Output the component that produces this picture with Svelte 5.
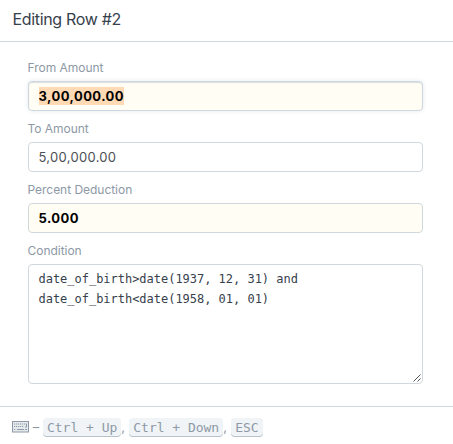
<script>
  const fields = [
    { label: 'From Amount', value: '3,00,000.00', required: true, active: true },
    { label: 'To Amount', value: '5,00,000.00' },
    { label: 'Percent Deduction', value: '5.000', required: true }
  ];
  const conditions = [
    'date_of_birth>date(1937, 12, 31) and',
    'date_of_birth<date(1958, 01, 01)'
  ];
  const shortcuts = ['Ctrl + Up', 'Ctrl + Down', 'ESC'];
</script>

<div class="editor">
  <header><span class="title">Editing Row #2</span></header>
  <main>
    {#each fields as field}
      <div class="field">
        <div class="label">{field.label}</div>
        <div class="control" class:required={field.required} class:active={field.active}>
          <span class="value">{field.value}</span>
        </div>
      </div>
    {/each}
    <div class="label">Condition</div>
    <div class="area">
      {#each conditions as line}
        <div class="line">{line}</div>
      {/each}
      <svg class="grip" width="8" height="8" viewBox="0 0 8 8"><path d="M0.5 7.5L7.5 0.5M4.5 7.5L7.5 4.5" /></svg>
    </div>
  </main>
  <footer>
    <svg class="keyboard" width="17" height="12" viewBox="0 0 17 12">
      <rect x=".5" y=".5" width="16" height="10.5" fill="#e6eaed" />
      <path d="M2 3H15M2 5.5H12M2 8.5H4" stroke-dasharray="1.2 .8" />
      <path d="M5 8.5H12M13 8.5H15M14.5 3V6H13" />
    </svg>
    <span class="dash">–</span>
    {#each shortcuts as shortcut, i}
      <kbd>{shortcut}</kbd>{#if i < shortcuts.length - 1}<span class="comma">,</span>{/if}
    {/each}
  </footer>
</div>

<style>
  :global(body) { background: #fff; }
  .editor {
    height: 444px;
    display: flex;
    flex-direction: column;
    overflow: hidden;
    box-sizing: border-box;
    font-family: Inter, sans-serif;
    color: #36414c;
  }
  header {
    box-sizing: border-box;
    height: 42px;
    padding: 8px 12.5px;
    border-bottom: 1px solid #d1d8dd;
    font-size: 16px;
    line-height: 23px;
    letter-spacing: -0.33px;
  }
  main {
    box-sizing: border-box;
    height: 364px;
    padding: 17px 30px 0 28px;
  }
  .field { height: 61px; }
  .label {
    height: 22px;
    margin-left: -0.5px;
    font-size: 12px;
    line-height: 18px;
    color: #8d99a6;
    letter-spacing: -0.03px;
  }
  .control {
    box-sizing: border-box;
    height: 30px;
    padding: 0 9.5px;
    display: flex;
    align-items: center;
    border: 1px solid #d1d8dd;
    border-radius: 4px;
    font-size: 13px;
    color: #4b4f54;
    letter-spacing: 0.3px;
  }
  .required { background: #fffdf4; color: #000; font-weight: 700; letter-spacing: 0.45px; }
  .active { box-shadow: inset 0 1px 1px #d9dee2, 0 0 4px rgba(102, 145, 185, .2); }
  .value { line-height: 18px; }
  .active .value { background: #ffdab5; }
  .area {
    position: relative;
    box-sizing: border-box;
    height: 120px;
    padding: 4px 9.5px;
    border: 1px solid #d1d8dd;
    border-radius: 4px;
    font: 12px/20px "DejaVu Sans Mono", monospace;
    letter-spacing: -0.02px;
  }
  .line { white-space: pre; }
  .grip { position: absolute; right: 1px; bottom: 1px; stroke: #555; fill: none; }
  footer {
    box-sizing: border-box;
    height: 38px;
    padding: 11px 12px 0;
    display: flex;
    align-items: flex-start;
    border-top: 1px solid #d1d8dd;
    color: #8d99a6;
    font-size: 13px;
  }
  .keyboard { margin-top: 3px; fill: none; stroke: #8d99a6; flex: none; }
  .dash { width: 14px; text-align: center; line-height: 19px; }
  kbd {
    box-sizing: border-box;
    height: 19px;
    padding: 0 4px;
    border-radius: 4px;
    background: #f0f4f7;
    box-shadow: inset 0 -1px 0 #b8c2cc;
    font: 13px/19px "DejaVu Sans Mono", monospace;
    letter-spacing: -0.02px;
    white-space: pre;
  }
  .comma { width: 8px; line-height: 18px; box-sizing: border-box; }
</style>
